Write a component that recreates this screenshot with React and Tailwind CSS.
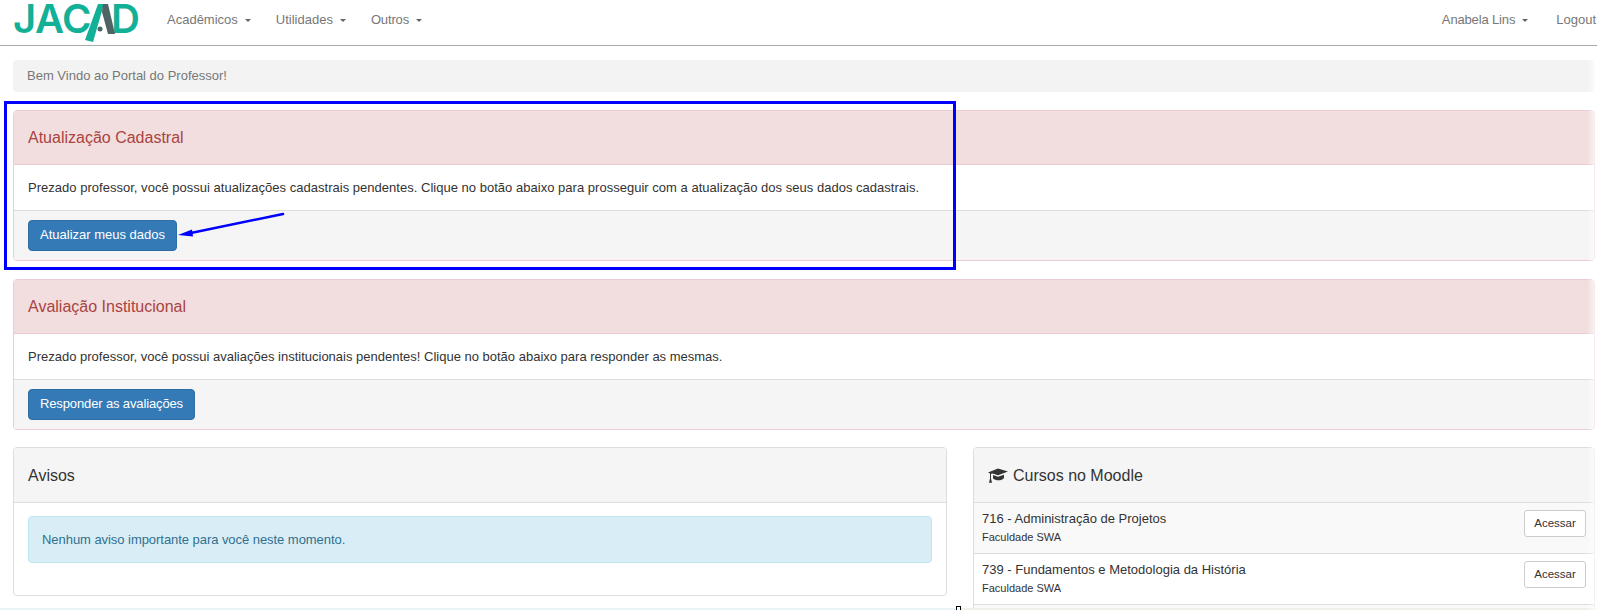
const NavItem = ({ label, caret = true, className = "" }) => (
  <span className={`flex items-center text-[#777] ${className}`}>
    {label}
    {caret && (
      <span className="ml-[7px] mt-[2px] h-0 w-0 border-x-[3px] border-t-[3px] border-x-transparent border-t-[#666]" />
    )}
  </span>
);

const Logo = () => (
  <svg width="150" height="44" viewBox="0 0 150 44" className="shrink-0 self-start">
    <g fontFamily="Inter, sans-serif" fontWeight="600" fontSize="40" fill="#12b096">
      <text x="13" y="33">J</text>
      <text x="35" y="33">A</text>
      <text x="62" y="33">C</text>
      <text x="111" y="33">D</text>
    </g>
    <polygon points="98,4 104,4 93,42 85,40" fill="#12b096" />
    <polygon points="103,4 108,4 115,34 108,34 102,12" fill="#4f6464" />
    <circle cx="100" cy="29" r="2.5" fill="#4f6464" />
  </svg>
);

const AlertPanel = ({ title, text, action, textClass = "", actionClass = "" }) => (
  <div className="mb-[18px] overflow-hidden rounded border border-[#ebccd1] bg-white">
    <div className="flex h-[54px] items-center border-b border-[#ebccd1] bg-[#f2dede] px-[14px] text-[16px] text-[#a94442]">
      {title}
    </div>
    <div className={`flex h-[45px] items-center px-[14px] text-[#333] ${textClass}`}>{text}</div>
    <div className="flex h-[50px] items-center border-t border-[#ddd] bg-[#f5f5f5] px-[14px]">
      <button className={`h-[31px] rounded border border-[#2e6da4] bg-[#337ab7] px-[11px] pb-px text-white ${actionClass}`}>
        {action}
      </button>
    </div>
  </div>
);

const CourseRow = ({ name, striped }) => (
  <div className={`flex h-[51px] items-center justify-between border-b border-[#ddd] pl-[8px] pr-[8px] ${striped ? "bg-[#f9f9f9]" : "bg-white"}`}>
    <div className="mb-[2px]">
      <div className="text-[#333] leading-[20px]">{name}</div>
      <div className="mt-[1px] text-[11px] leading-[15px] text-[#333]">Faculdade SWA</div>
    </div>
    <button className="mb-[9px] h-[27px] w-[62px] rounded-[3px] border border-[#ccc] bg-white text-[11.5px] text-[#333]">
      Acessar
    </button>
  </div>
);

export default function App() {
  return (
    <div className="relative h-[610px] w-[1597px] overflow-hidden bg-white text-[13px] font-['Liberation_Sans',Arial,sans-serif]">
      {/* Navbar */}
      <nav className="flex h-[46px] items-center border-b border-[#aaa] bg-white pb-[6px] pr-[1px]">
        <Logo />
        <div className="ml-[17px] flex gap-[25px]">
          <NavItem label="Acadêmicos" />
          <NavItem label="Utilidades" />
          <NavItem label="Outros" className="tracking-[-0.15px]" />
        </div>
        <div className="ml-auto flex items-center">
          <NavItem label="Anabela Lins" className="tracking-[-0.15px]" />
          <NavItem label="Logout" caret={false} className="ml-[28px] whitespace-nowrap" />
        </div>
      </nav>

      <main className="pl-[13px] pr-[2px] pt-[14px]">
        <div className="mb-[18px] flex h-[32px] items-center rounded bg-[#f3f3f3] px-[14px] text-[#777]">
          Bem Vindo ao Portal do Professor!
        </div>

        <AlertPanel
          title="Atualização Cadastral"
          text="Prezado professor, você possui atualizações cadastrais pendentes. Clique no botão abaixo para prosseguir com a atualização dos seus dados cadastrais."
          action="Atualizar meus dados"
          textClass="tracking-[0.02px]"
        />
        <AlertPanel
          title="Avaliação Institucional"
          text="Prezado professor, você possui avaliações institucionais pendentes! Clique no botão abaixo para responder as mesmas."
          action="Responder as avaliações"
          actionClass="tracking-[-0.13px]"
        />

        <div className="-mt-px flex items-start gap-[26px]">
          <div className="h-[149px] w-[934px] shrink-0 overflow-hidden rounded border border-[#ddd] bg-white">
            <div className="flex h-[55px] items-center border-b border-[#ddd] bg-[#f5f5f5] px-[14px] pt-px text-[16px] text-[#333]">
              Avisos
            </div>
            <div className="px-[14px] pt-[13px]">
              <div className="flex h-[47px] items-center rounded border border-[#bce8f1] bg-[#d9edf7] px-[13px] tracking-[-0.05px] text-[#31708f]">
                Nenhum aviso importante para você neste momento.
              </div>
            </div>
          </div>

          <div className="min-w-0 flex-1 overflow-hidden rounded border border-[#ddd] bg-white">
            <div className="flex h-[55px] items-center gap-[5px] border-b border-[#ddd] bg-[#f5f5f5] px-[14px] pt-px text-[16px] text-[#333]">
              <svg width="20" height="15" viewBox="0 0 20 15" fill="#333">
                <path d="M0 4.5 10 .5 20 3.5 10 7.2 4.5 5.4 3 6V10.5L4 14.8H1L2 10.5V5.5Z" />
                <path d="M5 7 10 8.8 16 6.8V10C14 13 7.5 13 5 10.5Z" />
              </svg>
              Cursos no Moodle
            </div>
            <CourseRow name="716 - Administração de Projetos" striped />
            <CourseRow name="739 - Fundamentos e Metodologia da História" />
            <div className="h-[51px] bg-[#f9f9f9]" />
          </div>
        </div>
      </main>

      {/* Blue annotation over the screenshot */}
      <div className="absolute left-[4px] top-[101px] h-[169px] w-[952px] border-[3px] border-[#0000ff]" />
      <svg className="absolute left-[170px] top-[205px]" width="120" height="35" viewBox="0 0 120 35">
        <line x1="113" y1="9" x2="16" y2="29" stroke="#0000ff" strokeWidth="2.5" strokeLinecap="round" />
        <polygon points="8,30 22,24.5 23,31.5" fill="#0000ff" />
      </svg>

      {/* Bottom edge */}
      <div className="absolute bottom-0 left-0 flex h-[2px] w-full">
        <div className="w-[956px] bg-[#e9f4f7]" />
        <div className="flex-1 bg-[#f0f0ea]" />
      </div>
      <div className="absolute bottom-0 left-[956px] h-[4px] w-[5px] border border-b-0 border-black bg-white" />
      {/* Fade at right edge */}
      <div className="absolute right-0 top-[46px] h-[564px] w-[10px] bg-gradient-to-r from-transparent to-white/80" />
    </div>
  );
}
